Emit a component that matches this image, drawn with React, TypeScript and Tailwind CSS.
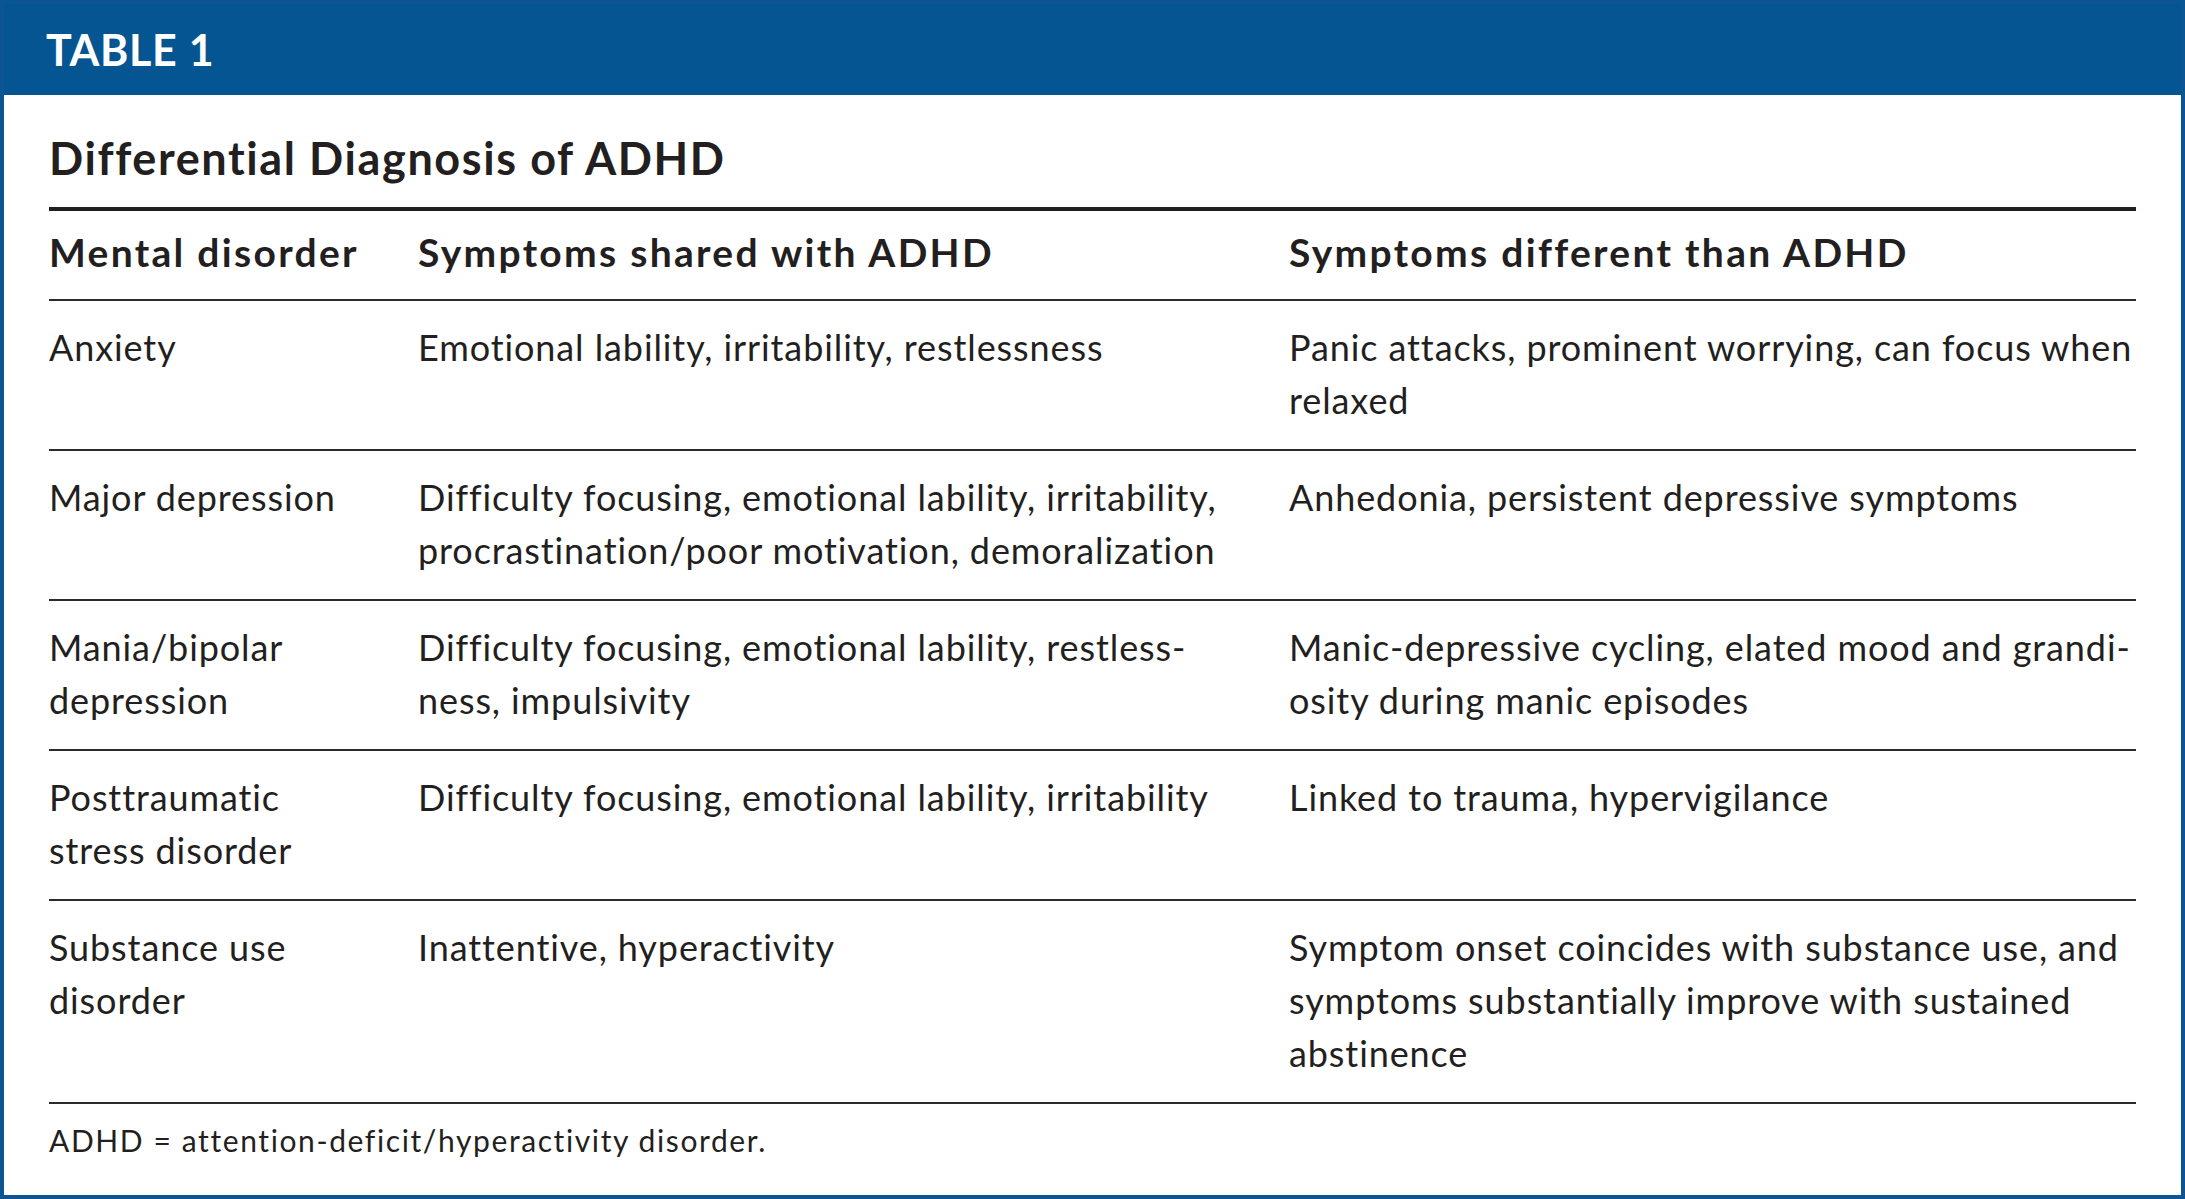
const rows: { disorder: string[]; shared: string[]; different: string[] }[] = [
  {
    disorder: ['Anxiety'],
    shared: ['Emotional lability, irritability, restlessness'],
    different: ['Panic attacks, prominent worrying, can focus when', 'relaxed'],
  },
  {
    disorder: ['Major depression'],
    shared: ['Difficulty focusing, emotional lability, irritability,', 'procrastination/poor motivation, demoralization'],
    different: ['Anhedonia, persistent depressive symptoms'],
  },
  {
    disorder: ['Mania/bipolar', 'depression'],
    shared: ['Difficulty focusing, emotional lability, restless-', 'ness, impulsivity'],
    different: ['Manic-depressive cycling, elated mood and grandi-', 'osity during manic episodes'],
  },
  {
    disorder: ['Posttraumatic', 'stress disorder'],
    shared: ['Difficulty focusing, emotional lability, irritability'],
    different: ['Linked to trauma, hypervigilance'],
  },
  {
    disorder: ['Substance use', 'disorder'],
    shared: ['Inattentive, hyperactivity'],
    different: [
      'Symptom onset coincides with substance use, and',
      'symptoms substantially improve with sustained',
      'abstinence',
    ],
  },
];

function Lines({ lines }: { lines: string[] }) {
  return (
    <div className="flex flex-col">
      {lines.map((l) => (
        <span key={l} className="whitespace-nowrap">{l}</span>
      ))}
    </div>
  );
}

export default function App() {
  return (
    <div
      className="w-[2185px] h-[1199px] bg-white border-4 border-[#0a5592] flex flex-col text-[#231f20]"
      style={{ fontFamily: 'Lato, "Open Sans", sans-serif' }}
    >
      {/* Header bar */}
      <div className="h-[91px] bg-[#045591] flex items-center pl-[42px]">
        <span className="text-white font-bold text-[43px] leading-none tracking-[0.7px]">TABLE 1</span>
      </div>

      <div className="px-[45px] flex flex-col">
        <h1 className="mt-[37px] text-[45px] leading-[53px] font-bold tracking-[1.6px]">
          Differential Diagnosis of ADHD
        </h1>

        <div className="mt-[22px] h-[4px] bg-[#231f20]" />

        {/* Column headings */}
        <div className="grid grid-cols-[369px_871px_1fr] pt-[15px] pb-[20px] border-b-2 border-[#2b2b2b] text-[39px] leading-[53px] font-bold tracking-[2.3px]">
          <span>Mental disorder</span>
          <span>Symptoms shared with ADHD</span>
          <span>Symptoms different than ADHD</span>
        </div>

        {rows.map((r) => (
          <div
            key={r.disorder.join(' ')}
            className="grid grid-cols-[369px_871px_1fr] pt-[20px] pb-[22px] border-b-2 border-[#2b2b2b] text-[36px] leading-[53px] tracking-[0.9px]"
          >
            <Lines lines={r.disorder} />
            <Lines lines={r.shared} />
            <Lines lines={r.different} />
          </div>
        ))}

        <p className="mt-[16px] text-[30px] leading-[40px] tracking-[1.6px]">
          ADHD = attention-deficit/hyperactivity disorder.
        </p>
      </div>
    </div>
  );
}
